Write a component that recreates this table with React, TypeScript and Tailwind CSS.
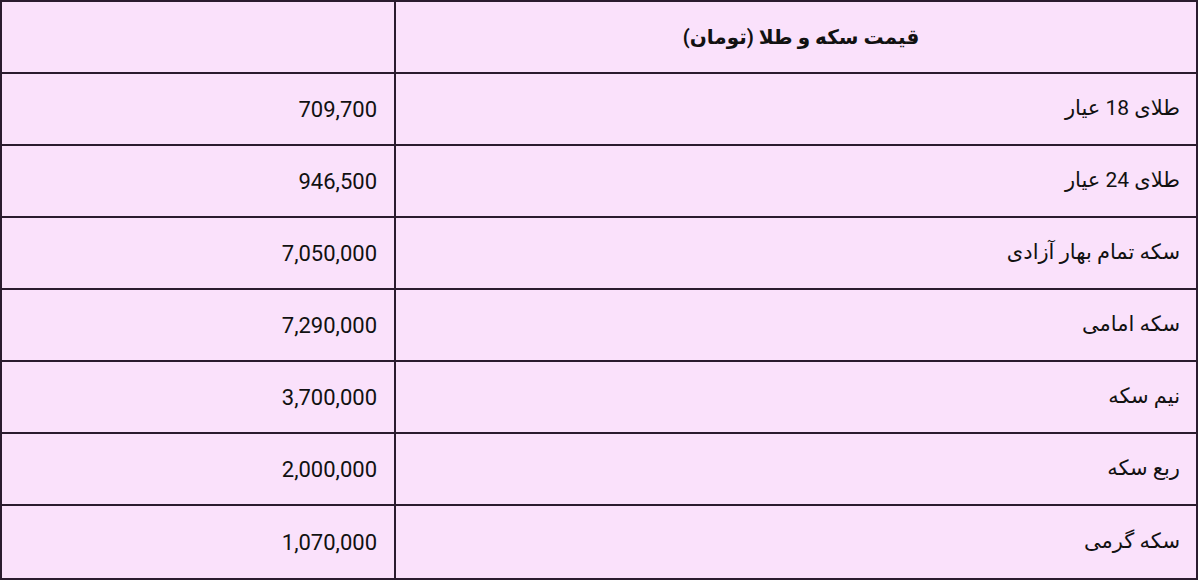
import React from "react";

const rows: [string, string][] = [
  ["طلای 18 عیار", "709,700"],
  ["طلای 24 عیار", "946,500"],
  ["سکه تمام بهار آزادی", "7,050,000"],
  ["سکه امامی", "7,290,000"],
  ["نیم سکه", "3,700,000"],
  ["ربع سکه", "2,000,000"],
  ["سکه گرمی", "1,070,000"],
];

export default function App() {
  return (
    <div className="w-[1200px] h-[581px] bg-white overflow-hidden">
      <div
        className="w-[1198px] h-[580px] border-2 border-[#2a1b2e] bg-[#fae1fb] flex flex-col text-[#111]"
        style={{ fontFamily: 'Roboto, "DejaVu Sans", sans-serif' }}
      >
        <div className="flex h-[72px] shrink-0 border-b-2 border-[#2a1b2e]">
          <div className="w-[394px] shrink-0 border-r-2 border-[#2a1b2e]" />
          <div
            dir="rtl"
            className="flex-1 flex items-center justify-center text-[20px] font-bold pl-[10px]"
          >
            قیمت سکه و طلا (تومان)
          </div>
        </div>
        {rows.map(([label, value], i) => (
          <div
            key={i}
            className={
              i === rows.length - 1
                ? "flex flex-1"
                : "flex h-[72px] shrink-0 border-b-2 border-[#2a1b2e]"
            }
          >
            <div className="w-[394px] shrink-0 border-r-2 border-[#2a1b2e] flex items-center justify-end pr-[17px] text-[22px]">
              {value}
            </div>
            <div
              dir="rtl"
              className="flex-1 flex items-center justify-start pr-[16px] text-[21px]"
            >
              {label}
            </div>
          </div>
        ))}
      </div>
    </div>
  );
}
